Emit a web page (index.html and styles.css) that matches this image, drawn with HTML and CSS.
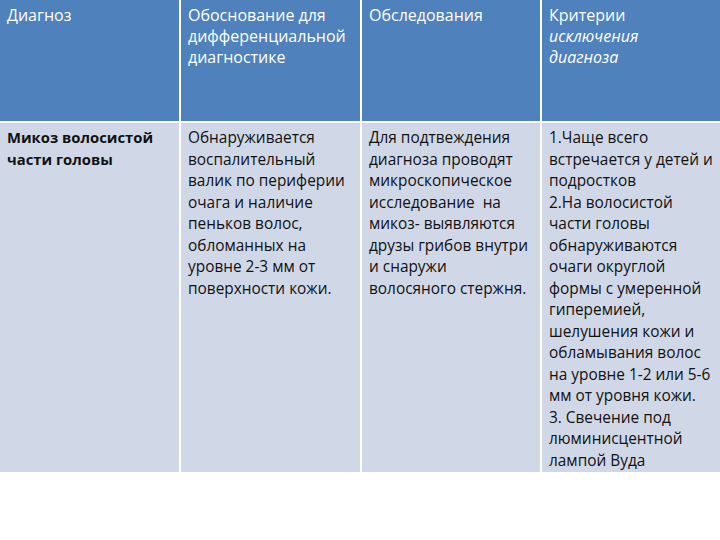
FILE: index.html
```html
<!DOCTYPE html>
<html lang="ru">
<head>
<meta charset="utf-8">
<link rel="stylesheet" href="styles.css">
</head>
<body>
<div class="table">
  <div class="cell head">Диагноз</div>
  <div class="cell head">Обоснование для<br>дифференциальной<br>диагностике</div>
  <div class="cell head">Обследования</div>
  <div class="cell head">Критерии<br><i>исключения<br>диагноза</i></div>
  <div class="cell body first"><b>Микоз волосистой<br>части головы</b></div>
  <div class="cell body">Обнаруживается<br>воспалительный<br>валик по периферии<br>очага и наличие<br>пеньков волос,<br>обломанных на<br>уровне 2-3 мм от<br>поверхности кожи.</div>
  <div class="cell body">Для подтвеждения<br>диагноза проводят<br>микроскопическое<br>исследование&nbsp; на<br>микоз- выявляются<br>друзы грибов внутри<br>и снаружи<br>волосяного стержня.</div>
  <div class="cell body">1.Чаще всего<br>встречается у детей и<br>подростков<br>2.На волосистой<br>части головы<br>обнаруживаются<br>очаги округлой<br>формы с умеренной<br>гиперемией,<br>шелушения кожи и<br>обламывания волос<br>на уровне 1-2 или 5-6<br>мм от уровня кожи.<br>3. Свечение под<br>люминисцентной<br>лампой Вуда</div>
</div>
</body>
</html>
```
FILE: styles.css
```css
html, body {
  margin: 0;
  padding: 0;
  background: #ffffff;
}
.table {
  display: grid;
  grid-template-columns: 179px 179px 178px 178px;
  grid-template-rows: 121px 349px;
  column-gap: 2px;
  row-gap: 2px;
  width: 720px;
  font-family: "Open Sans", "Liberation Sans", sans-serif;
  line-height: 21.6px;
}
.cell {
  white-space: nowrap;
  overflow: hidden;
}
.head {
  background: #4f81bd;
  color: #ffffff;
  font-size: 16px;
  padding: 5px 6px 0 7px;
  line-height: 21px;
}
.body {
  background: #d0d8e8;
  color: #111111;
  font-size: 15.4px;
  padding: 4px 4px 0 7px;
  line-height: 21.5px;
}
.first {
  font-size: 14.8px;
}
```
